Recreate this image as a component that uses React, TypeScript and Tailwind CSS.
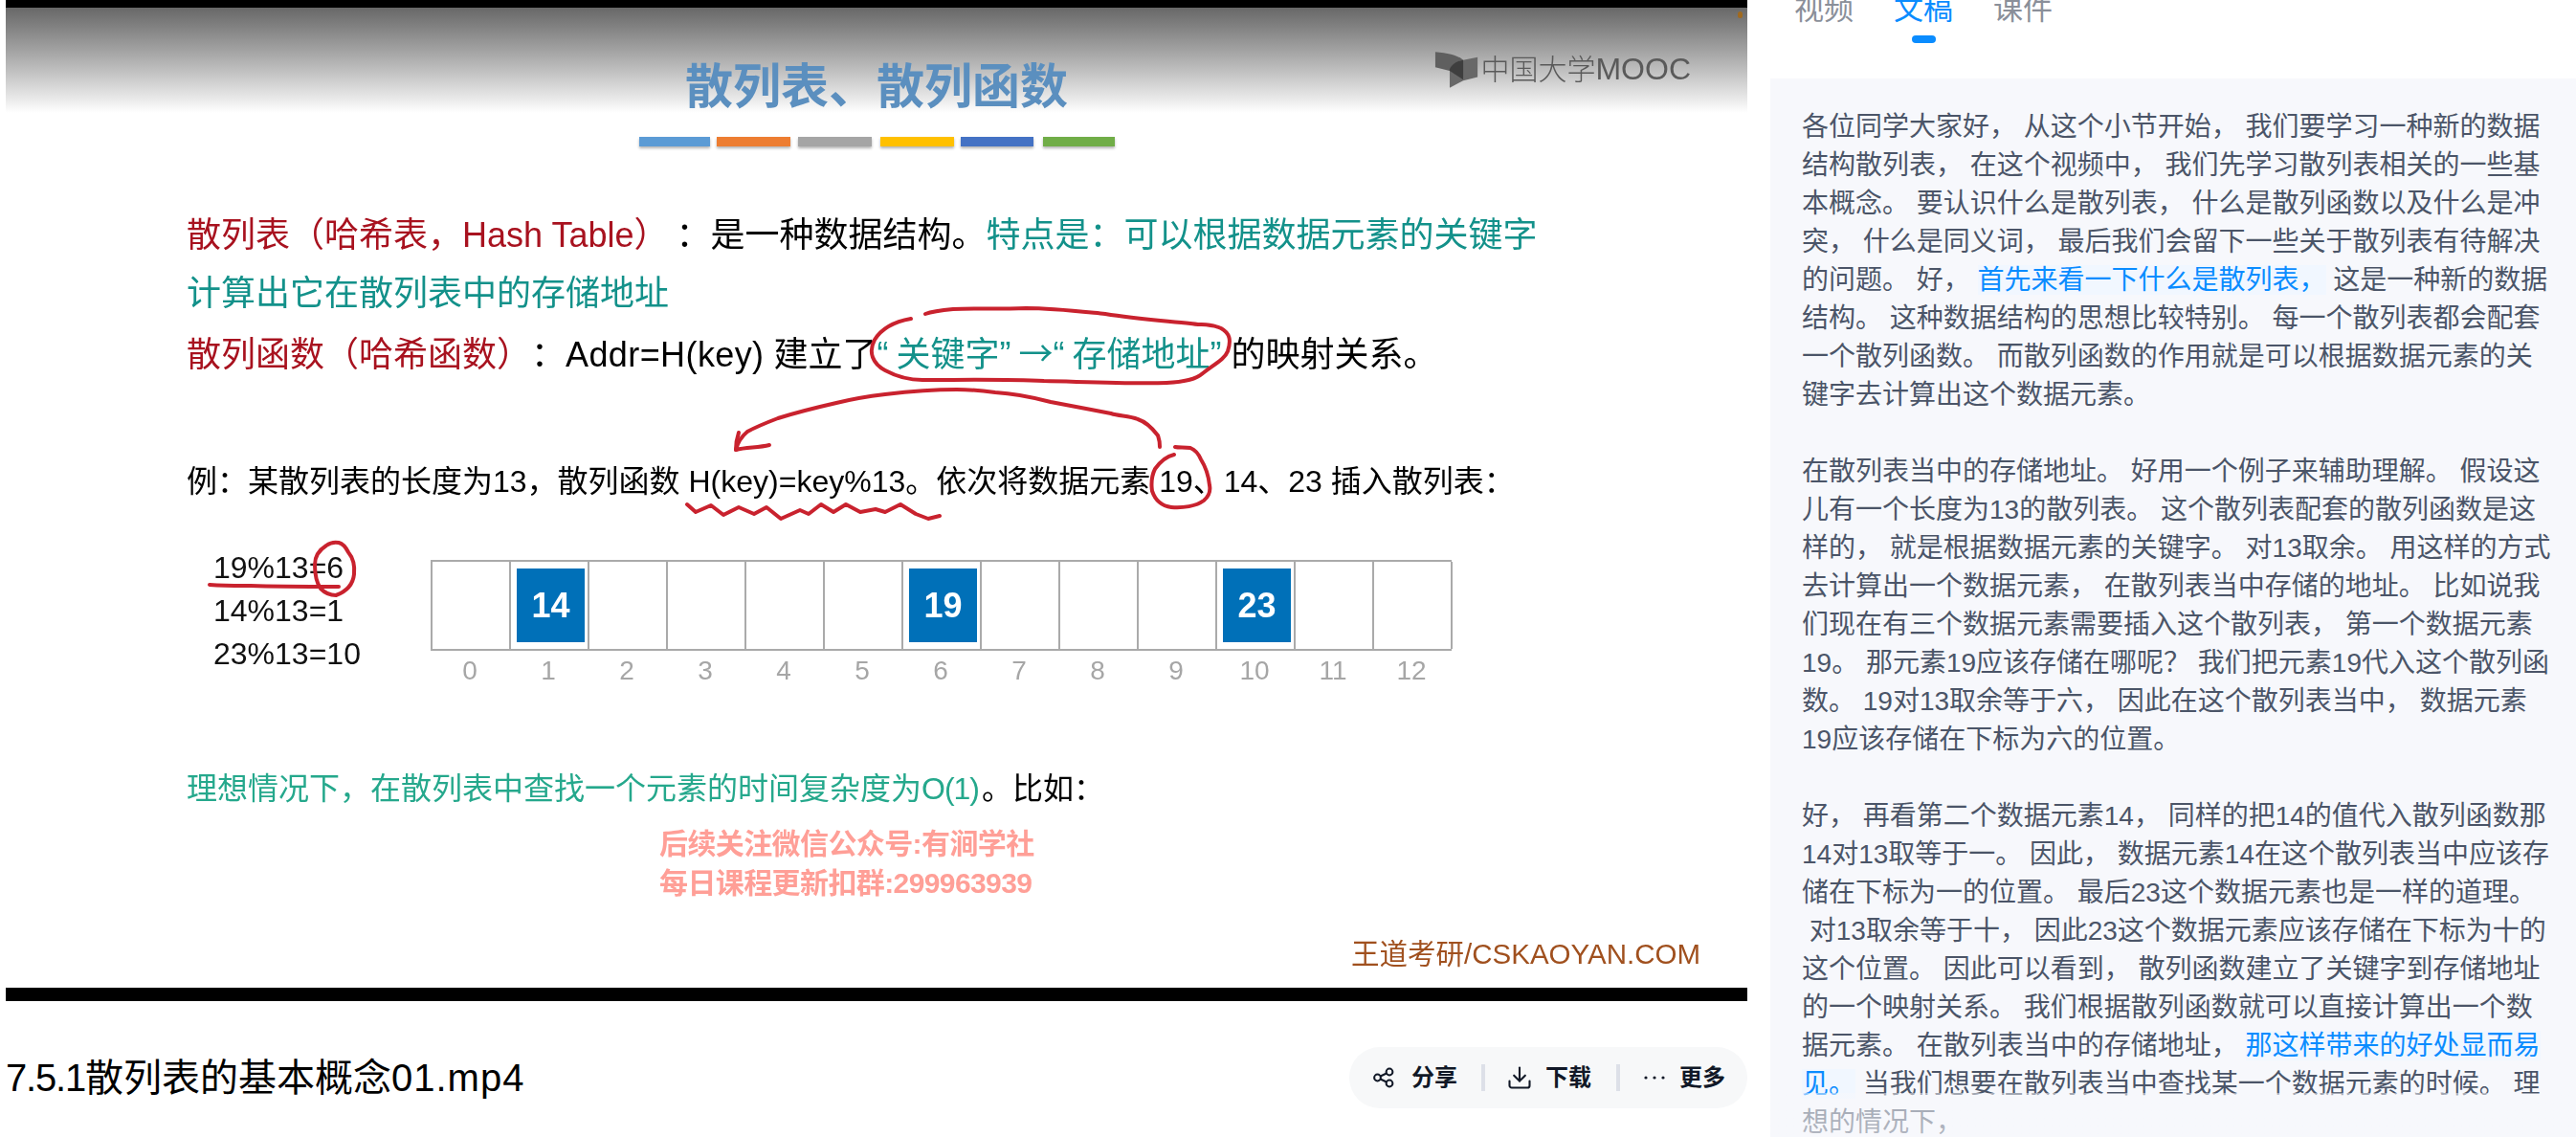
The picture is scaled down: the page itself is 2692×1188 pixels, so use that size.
import { Download } from "lucide-react";

type Piece = { t: string; hi?: boolean };

const BARS = [
  "w-[74px] bg-[#5b9bd5] mr-[7px]",
  "w-[77px] bg-[#ed7d31] mr-[8px]",
  "w-[77px] bg-[#a5a5a5] mr-[9px]",
  "w-[77px] bg-[#ffc000] mr-[7px]",
  "w-[76px] bg-[#4472c4] mr-[10px]",
  "w-[75px] bg-[#70ad47]",
];

const CELLS: Record<number, string> = { 1: "14", 6: "19", 10: "23" };

const TRANSCRIPT: (string | Piece[])[] = [
  "各位同学大家好， 从这个小节开始， 我们要学习一种新的数据",
  "结构散列表， 在这个视频中， 我们先学习散列表相关的一些基",
  "本概念。 要认识什么是散列表， 什么是散列函数以及什么是冲",
  "突， 什么是同义词， 最后我们会留下一些关于散列表有待解决",
  [{ t: "的问题。 好， " }, { t: "首先来看一下什么是散列表，", hi: true }, { t: " 这是一种新的数据" }],
  "结构。 这种数据结构的思想比较特别。 每一个散列表都会配套",
  "一个散列函数。 而散列函数的作用就是可以根据数据元素的关",
  "键字去计算出这个数据元素。",
  "",
  "在散列表当中的存储地址。 好用一个例子来辅助理解。 假设这",
  "儿有一个长度为13的散列表。 这个散列表配套的散列函数是这",
  "样的， 就是根据数据元素的关键字。 对13取余。 用这样的方式",
  "去计算出一个数据元素， 在散列表当中存储的地址。 比如说我",
  "们现在有三个数据元素需要插入这个散列表， 第一个数据元素",
  "19。 那元素19应该存储在哪呢？ 我们把元素19代入这个散列函",
  "数。 19对13取余等于六， 因此在这个散列表当中， 数据元素",
  "19应该存储在下标为六的位置。",
  "",
  "好， 再看第二个数据元素14， 同样的把14的值代入散列函数那",
  "14对13取等于一。 因此， 数据元素14在这个散列表当中应该存",
  "储在下标为一的位置。 最后23这个数据元素也是一样的道理。",
  " 对13取余等于十， 因此23这个数据元素应该存储在下标为十的",
  "这个位置。 因此可以看到， 散列函数建立了关键字到存储地址",
  "的一个映射关系。 我们根据散列函数就可以直接计算出一个数",
  [{ t: "据元素。 在散列表当中的存储地址， " }, { t: "那这样带来的好处显而易", hi: true }],
  [{ t: "见。", hi: true }, { t: " 当我们想要在散列表当中查找某一个数据元素的时候。 理" }],
  "想的情况下，",
];

function Strokes() {
  return (
    <svg
      className="absolute left-0 top-0 w-[1826px] h-[1046px] pointer-events-none"
      viewBox="0 0 1826 1046"
      fill="none"
      stroke="#c9222e"
      strokeWidth="4"
      strokeLinecap="round"
      strokeLinejoin="round"
    >
      <path d="M952 333 C935 336 922 342 914 355 C907 368 912 380 925 387 C938 394 950 397 964 397 C1005 397 1050 396 1091 398 C1135 399 1180 401 1219 400 C1240 399 1250 396 1257 390 C1270 380 1280 375 1283 367 C1287 355 1285 348 1276 343 C1265 338 1255 340 1244 338 C1215 335 1185 333 1155 328 C1125 325 1100 322 1072 322 C1045 323 1020 322 996 323 C985 324 975 325 967 328" />
      <path d="M1212 467 C1212 460 1211 458 1210 455 C1204 447 1198 441 1189 438 C1180 434 1170 435 1161 432 C1140 428 1120 424 1098 420 C1075 414 1058 411 1040 410 C1025 408 1012 407 1000 407 C975 407 950 409 925 412 C908 414 890 417 874 421 C852 426 832 431 813 437 C800 442 790 446 781 451 C775 456 771 462 769 470" />
      <path d="M772 452 C770 458 769 464 769 470 C780 467 792 468 804 465" />
      <path d="M1227 475 C1218 477 1212 483 1207 490 C1203 498 1203 506 1204 513 C1207 522 1214 529 1224 530 C1236 531 1250 529 1258 523 C1264 518 1265 512 1264 507 C1263 497 1260 488 1255 480 C1252 473 1249 470 1244 468 C1238 467 1232 468 1228 467" />
      <polyline points="718,527 727,535 743,528 756,538 772,530 788,537 801,530 816,542 836,533 845,537 858,527 871,535 884,527 899,535 915,532 925,535 941,527 957,537 970,542 982,539" />
      <path d="M341 570 C333 575 329 582 329 590 C329 600 331 609 335 615 C340 620 346 622 351 622 C362 618 369 610 370 600 C371 590 369 583 364 577 C361 571 358 568 354 567 C349 566 345 567 341 570" />
      <path d="M219 611 C235 612 248 612 262 612 C290 613 325 613 354 613" />
    </svg>
  );
}

function LogoMark() {
  return (
    <svg className="w-[47px] h-[40px] shrink-0" viewBox="0 0 50 42">
      <path d="M1 1 C15 2 26 5 32 10 L32 32 L17 22 L1 18 Z" fill="#5f5f5f" />
      <path d="M17 20 C20 14 26 11 32 10 L48 7 L48 29 L32 33 L17 41 Z" fill="#686868" />
      <path d="M17 20 C20 14 26 11 32 10 L32 32 L17 22 Z" fill="#3e3e3e" />
    </svg>
  );
}

function ShareIcon() {
  return (
    <svg className="w-[22px] h-[22px] shrink-0" viewBox="0 0 22 22" fill="none" stroke="currentColor" strokeWidth="2">
      <circle cx="4.5" cy="11" r="3.4" />
      <circle cx="17" cy="5" r="3.4" />
      <circle cx="17" cy="17" r="3.4" />
      <path d="M7.6 9.5 L13.9 6.5 M7.6 12.5 L13.9 15.5" />
    </svg>
  );
}

function DotsIcon() {
  return (
    <svg className="w-[22px] h-[6px] shrink-0" viewBox="0 0 22 6" fill="currentColor">
      <circle cx="2" cy="3" r="1.6" />
      <circle cx="11" cy="3" r="1.6" />
      <circle cx="20" cy="3" r="1.6" />
    </svg>
  );
}

function Slide() {
  return (
    <div className="w-[1820px] h-[1024px] bg-white overflow-hidden blur-[0.5px] [text-spacing-trim:space-all]">
      <div className="h-[110px] bg-gradient-to-b from-[#686868] to-white grid grid-cols-[1fr_auto_1fr]">
        <div />
        <div className="pt-[53px] text-[50px] leading-[60px] font-bold text-[#5b8fbf]">散列表、散列函数</div>
        <div className="relative">
          <div className="absolute right-[59px] top-[44px] flex items-center gap-[1px]">
            <LogoMark />
            <span className="text-[30px] leading-[40px] text-[#5a5a5a] font-light whitespace-pre">
              中国大学<span className="text-[32px]">MOOC</span>
            </span>
          </div>
        </div>
      </div>

      <div className="mt-[25px] flex justify-center">
        {BARS.map((cls) => (
          <div key={cls} className={`h-[10px] shadow-[0_2px_3px_rgba(0,0,0,0.3)] ${cls}`} />
        ))}
      </div>

      <div className="mt-[62px] pl-[189px] text-[36px] leading-[61px] text-black whitespace-pre">
        <div>
          <span className="text-[#a8121f]">散列表（哈希表，Hash Table）</span>
          <span className="ml-[8px]">：是一种数据结构。</span>
          <span className="text-[#13918a]">特点是：可以根据数据元素的关键字</span>
        </div>
        <div className="text-[#13918a]">计算出它在散列表中的存储地址</div>
        <div>
          <span className="text-[#a8121f]">散列函数（哈希函数）</span>
          <span>：</span>
          <span className="tracking-[0.4px]">Addr=H(key)</span>
          <span> 建立了</span>
          <span className="text-[#13918a]">
            <span className="inline-block w-[20px]">“</span>关键字<span className="inline-block w-[20px]">”</span>
            <span className="font-['Noto_Sans_CJK_SC']">→</span>
            <span className="inline-block w-[20px]">“</span>存储地址<span className="inline-block w-[22px]">”</span>
          </span>
          <span>的映射关系。</span>
        </div>
      </div>

      <div className="mt-[72px] pl-[189px] text-[32px] leading-[60px] text-black whitespace-pre">
        例：某散列表的长度为13，散列函数 H(key)=key%13。依次将数据元素 19、14、23 插入散列表：
      </div>

      <div className="mt-[38px] pl-[217px] flex items-start">
        <div className="w-[227px] text-[32px] leading-[45px] text-[#111]">
          <div>19%13=6</div>
          <div>14%13=1</div>
          <div>23%13=10</div>
        </div>
        <div className="mt-[14px]">
          <div className="grid grid-cols-[repeat(13,82px)] h-[95px] border-t-2 border-b-2 border-l-2 border-[#aaaaaa] w-[1067px]">
            {Array.from({ length: 13 }, (_, i) => (
              <div key={i} className="border-r-2 border-[#aaaaaa] pl-[6px] pt-[7px]">
                {CELLS[i] && (
                  <div className="w-[71px] h-[77px] bg-[#0070b8] flex items-center justify-center text-white text-[36px] font-bold">
                    {CELLS[i]}
                  </div>
                )}
              </div>
            ))}
          </div>
          <div className="mt-[5px] grid grid-cols-[repeat(13,82px)] text-center text-[28px] leading-[32px] text-[#a6a6a6]">
            {Array.from({ length: 13 }, (_, i) => (
              <div key={i}>{i}</div>
            ))}
          </div>
        </div>
      </div>

      <div className="mt-[77px] pl-[189px] text-[32px] leading-[60px]">
        <span className="text-[#25a88c]">
          理想情况下，在散列表中查找一个元素的时间复杂度为<span className="tracking-[-1px]">O(1)</span>
        </span>
        <span className="text-black ml-[3px]">。比如：</span>
      </div>

      <div className="mt-[7px] pl-[683px] text-[30px] leading-[41px] font-bold tracking-[-0.6px] text-[#ff9f97]">
        <div>后续关注微信公众号:有涧学社</div>
        <div>每日课程更新扣群:299963939</div>
      </div>

      <div className="mt-[34px] pr-[49px] text-right text-[29.5px] leading-[40px] text-[#a0501e]">王道考研/CSKAOYAN.COM</div>
    </div>
  );
}

function VideoColumn() {
  return (
    <div className="w-[1826px] shrink-0 pl-[6px]">
      <div className="bg-black pt-[8px] pb-[14px]">
        <Slide />
      </div>
      <div className="mt-[48px] flex items-center justify-between">
        <div className="text-[40px] leading-[64px] text-black">
          <span className="tracking-[-1.2px]">7.5.1</span>散列表的基本概念<span className="tracking-[1px]">01.mp4</span>
        </div>
        <div className="h-[64px] rounded-full bg-[#f7f8f9] flex items-center pl-[25px] pr-[23px] text-[24px] font-semibold text-[#111827]">
          <ShareIcon />
          <span className="ml-[18px]">分享</span>
          <div className="ml-[25px] mr-[22px] w-[4px] h-[28px] bg-[#dde0e8]" />
          <Download className="w-[28px] h-[28px]" strokeWidth={1.8} />
          <span className="ml-[13px]">下载</span>
          <div className="ml-[26px] mr-[25px] w-[4px] h-[28px] bg-[#dde0e8]" />
          <DotsIcon />
          <span className="ml-[15px]">更多</span>
        </div>
      </div>
    </div>
  );
}

function TranscriptColumn() {
  return (
    <div className="flex-1 min-w-0">
      <div className="-mt-[12px] pl-[49px] flex gap-[42px] text-[31px] leading-[44px] h-[57px] text-[#8a8f99]">
        <div>视频</div>
        <div className="flex flex-col items-center text-[#0a8cff]">
          文稿
          <div className="mt-[5px] w-[25px] h-[8px] rounded-full bg-[#0a8cff]" />
        </div>
        <div>课件</div>
      </div>
      <div className="relative mt-[37px] ml-[24px] h-[1106px] bg-[#f7f8fc] pl-[33px] pt-[31px] overflow-hidden text-[28px] leading-[40px] text-[#4b5568]">
        {TRANSCRIPT.map((line, i) => (
          <div key={i} className="h-[40px] whitespace-pre">
            {typeof line === "string"
              ? line
              : line.map((p, j) =>
                  p.hi ? (
                    <span key={j} className="text-[#0a8cff] bg-[#f1f7ff]">
                      {p.t}
                    </span>
                  ) : (
                    <span key={j}>{p.t}</span>
                  ),
                )}
          </div>
        ))}
        <div className="absolute left-0 right-0 bottom-0 h-[46px] bg-gradient-to-b from-[#f7f8fc80] to-[#f7f8fc99]" />
      </div>
    </div>
  );
}

export default function App() {
  return (
    <div className="relative w-[2692px] h-[1188px] overflow-hidden bg-white flex font-['Liberation_Sans','Noto_Sans_CJK_SC',sans-serif]">
      <VideoColumn />
      <TranscriptColumn />
      <Strokes />
      <div className="absolute left-[1816px] top-[12px] w-[5px] h-[7px] rounded-full bg-[#a06a20]" />
    </div>
  );
}
